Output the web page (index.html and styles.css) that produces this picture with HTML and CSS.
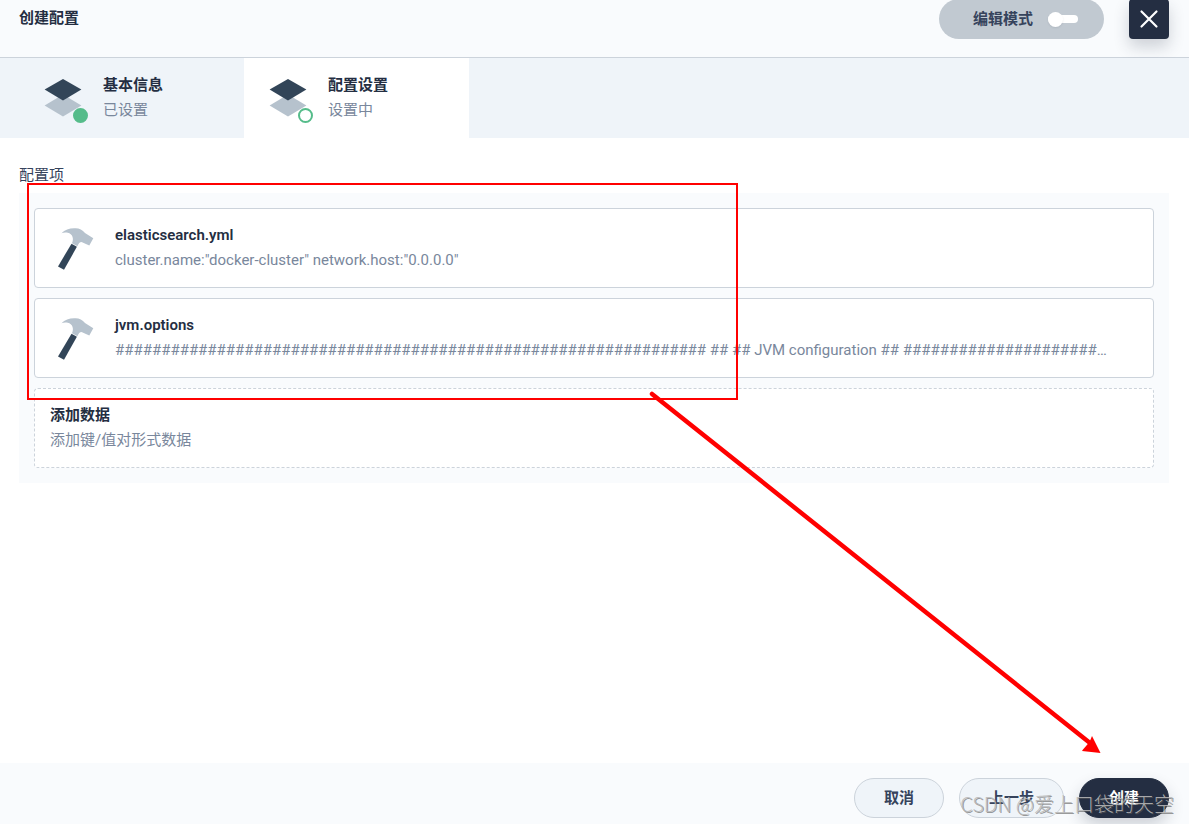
FILE: index.html
```html
<!DOCTYPE html>
<html lang="zh-CN">
<head>
<meta charset="utf-8">
<title>创建配置</title>
<meta name="viewport" content="width=device-width, initial-scale=1">
<link rel="stylesheet" href="styles.css">
</head>
<body>
<svg class="symbols" aria-hidden="true">
  <symbol id="layers" viewBox="0 0 40 40">
    <path fill="#b6c2cd" d="M20 16.5 38.4 27.5 20 38.4 1.6 27.5z"/>
    <path fill="#324558" d="M20 1 38.4 11.5 20 22.4 1.6 11.5z"/>
  </symbol>
  <symbol id="hammer" viewBox="0 0 40 48">
    <path fill="#b6c2cd" d="M6.500 9.200C10 5.500 15 4 20.500 4.300C24.500 4.500 27.500 5.800 30 9L38.300 14.300L34.300 21.400L26.500 18C24.800 18 23.500 19.500 22.400 22.200L17 19.300C19.200 14.500 17.500 10 12.800 8.800C10.500 8.300 8.500 8.500 6.500 9.200Z"/>
    <path fill="#324558" d="M16.500 19.700 21.900 22.800 9 45.800 3 42.400z"/>
  </symbol>
</svg>
<header class="header">
  <h1 class="title">创建配置</h1>
  <div class="actions">
    <label class="mode">编辑模式<input class="switch" type="checkbox" role="switch"></label>
    <button class="close" type="button" aria-label="关闭">
      <svg viewBox="0 0 20 20" width="20" height="20"><path d="M2.500 2.500 17.500 17.500M17.500 2.500 2.500 17.500" stroke="#fff" stroke-width="2.200" stroke-linecap="round"/></svg>
    </button>
  </div>
</header>
<nav class="tabs">
  <button class="tab" type="button">
    <span class="tab-icon"><svg width="40" height="40"><use href="#layers"/></svg><i class="dot done"></i></span>
    <span class="text"><strong class="name">基本信息</strong><span class="note">已设置</span></span>
  </button>
  <button class="tab current" type="button" aria-current="step">
    <span class="tab-icon"><svg width="40" height="40"><use href="#layers"/></svg><i class="dot"></i></span>
    <span class="text"><strong class="name">配置设置</strong><span class="note">设置中</span></span>
  </button>
</nav>
<main class="main">
  <h2 class="label">配置项</h2>
  <div class="panel">
    <div class="card">
      <svg class="hammer" width="40" height="48"><use href="#hammer"/></svg>
      <div class="text"><strong class="name">elasticsearch.yml</strong><span class="note">cluster.name:"docker-cluster" network.host:"0.0.0.0"</span></div>
    </div>
    <div class="card">
      <svg class="hammer" width="40" height="48"><use href="#hammer"/></svg>
      <div class="text"><strong class="name">jvm.options</strong><span class="note">################################################################ ## ## JVM configuration ## ################################################################</span></div>
    </div>
    <button class="card add" type="button">
      <span class="text"><strong class="name">添加数据</strong><span class="note">添加键/值对形式数据</span></span>
    </button>
  </div>
</main>
<footer class="footer">
  <button class="btn" type="button">取消</button>
  <button class="btn" type="button">上一步</button>
  <button class="btn primary" type="button">创建</button>
</footer>
<div class="highlight"></div>
<svg class="arrow" width="460" height="370" viewBox="0 0 460 370" aria-hidden="true">
  <path d="M7 9 445 358" stroke="#f00" stroke-width="4.500" stroke-linecap="round"/>
  <path d="M455.500 368 447 351 444.500 357 438 364.500 437 366z" fill="#f00"/>
</svg>
<div class="watermark">CSDN @爱上口袋的天空</div>
</body>
</html>
```
FILE: styles.css
```css
* { box-sizing: border-box; }
body {
  position: relative;
  display: flex;
  flex-direction: column;
  min-height: 100vh;
  margin: 0;
  overflow: hidden;
  background: #fff;
  color: #242e42;
  font: 15px/20px Roboto, "Noto Sans CJK SC", sans-serif;
}
button { font: inherit; color: inherit; cursor: pointer; }
.symbols { position: absolute; width: 0; height: 0; }
.header {
  display: flex;
  justify-content: space-between;
  height: 59px;
  margin-top: -1px;
  padding: 0 20px 0 19px;
  background: #f9fbfd;
  border-bottom: 1px solid #ccd3db;
}
.title { margin: 9px 0 0; font-size: 15px; font-weight: 600; line-height: 20px; }
.actions { display: flex; gap: 25px; }
.mode {
  display: flex;
  align-items: center;
  gap: 15px;
  height: 40px;
  padding: 0 26px 0 34px;
  border-radius: 20px;
  background: #c1c9d1;
  color: #36435c;
  font-weight: 600;
}
.switch {
  appearance: none;
  display: flex;
  align-items: center;
  width: 30px;
  height: 8px;
  margin: 0;
  border-radius: 4px;
  background: #fff;
}
.switch::before {
  content: "";
  width: 15px;
  height: 15px;
  border-radius: 50%;
  background: #fff;
  box-shadow: 0 1px 2px rgba(36, 46, 66, .1);
}
.close {
  display: grid;
  place-items: center;
  width: 40px;
  height: 40px;
  padding: 0;
  border: 0;
  border-radius: 4px;
  background: #242e42;
  box-shadow: 0 8px 16px rgba(36, 46, 66, .2);
}
.tabs { display: flex; padding-left: 19px; background: #eff4f9; }
.tab {
  display: flex;
  align-items: center;
  gap: 20px;
  width: 225px;
  height: 80px;
  padding: 0 24px;
  border: 0;
  background: none;
  text-align: left;
}
.current { background: #fff; }
.tab-icon { position: relative; width: 40px; height: 40px; }
.tab-icon svg { display: block; }
.dot {
  position: absolute;
  right: -5px;
  bottom: -5px;
  width: 15px;
  height: 15px;
  border: 2px solid #55bc8a;
  border-radius: 50%;
  background: #fff;
}
.done { background: #55bc8a; }
.text {
  display: flex;
  flex-direction: column;
  gap: 5px;
  flex: 1;
  min-width: 0;
  padding-bottom: 2px;
}
.name { font-weight: 600; }
.note { overflow: hidden; color: #79879c; text-overflow: ellipsis; white-space: nowrap; }
.main { flex: 1; padding: 27px 20px 20px 19px; }
.label { margin: 0 0 8px; color: #36435c; font-size: 15px; font-weight: 400; line-height: 20px; }
.panel { display: grid; gap: 10px; padding: 15px; background: #f9fbfd; }
.card {
  display: flex;
  align-items: center;
  min-width: 0;
  height: 80px;
  padding: 0 40px 0 20px;
  gap: 20px;
  border: 1px solid #ccd3db;
  border-radius: 4px;
  background: #fff;
  text-align: left;
}
.add { padding: 0 15px; border-style: dashed; }
.add .text { padding-bottom: 2px; }
.hammer { flex: none; }
.footer {
  display: flex;
  justify-content: flex-end;
  gap: 15px;
  padding: 15px 20px 6px;
  background: #f9fbfd;
}
.btn {
  height: 40px;
  padding: 0 29px;
  border: 1px solid #ccd3db;
  border-radius: 20px;
  background: #eff4f9;
  color: #36435c;
  font-weight: 600;
}
.primary {
  border-color: #242e42;
  background: #242e42;
  color: #fff;
  box-shadow: 0 8px 16px rgba(36, 46, 66, .2);
}
.highlight {
  position: absolute;
  left: 27px;
  top: 183px;
  width: 711px;
  height: 217px;
  border: 2px solid #f00;
}
.arrow { position: absolute; left: 645px; top: 385px; }
.watermark {
  position: absolute;
  right: 15px;
  bottom: 5px;
  color: rgba(185, 185, 185, .9);
  font: 300 20px/30px "Noto Sans CJK SC", sans-serif;
  text-shadow: 1px 1px 0 rgba(90, 90, 90, .6);
  pointer-events: none;
}
```
